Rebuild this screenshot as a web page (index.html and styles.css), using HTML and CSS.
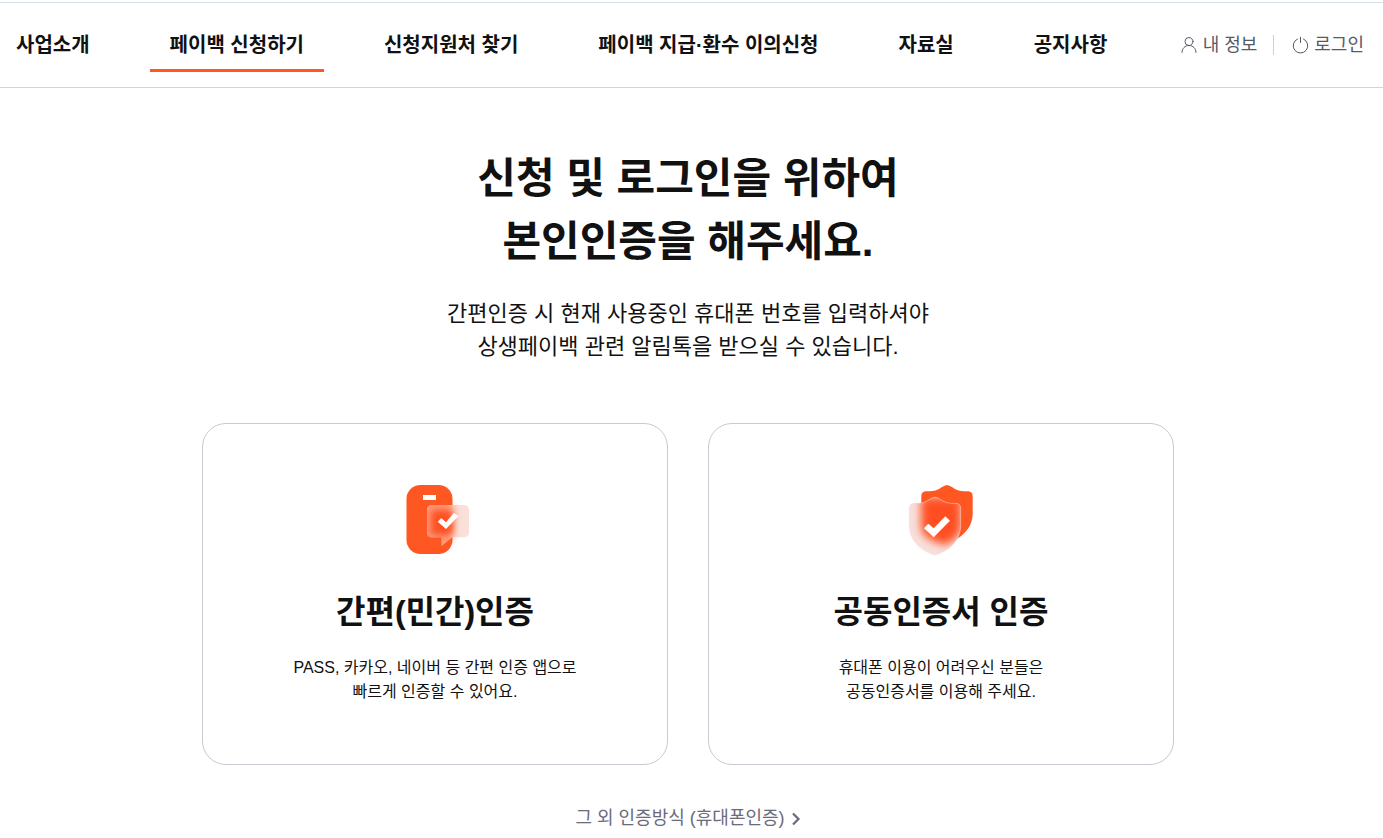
FILE: index.html
```html
<!DOCTYPE html>
<html lang="ko">
<head>
    <meta charset="UTF-8">
    <meta name="viewport" content="width=device-width, initial-scale=1.0">
    <title>본인인증</title>
    <link rel="stylesheet" href="styles.css">
</head>
<body>
    <header class="header">
        <nav class="gnb">
            <a href="#">사업소개</a>
            <a href="#" class="active">페이백 신청하기</a>
            <a href="#">신청지원처 찾기</a>
            <a href="#">페이백 지급·환수 이의신청</a>
            <a href="#">자료실</a>
            <a href="#">공지사항</a>
        </nav>
        <div class="util">
            <a href="#">
                <svg width="20" height="20" viewBox="0 0 20 20" fill="none" stroke="currentColor" stroke-linecap="round">
                    <circle cx="10" cy="6.5" r="4"/>
                    <path d="M3 17.5C3 13.4 6 10.5 10 10.5s7 2.9 7 7"/>
                </svg>
                내 정보
            </a>
            <a href="#">
                <svg width="20" height="20" viewBox="0 0 20 20" fill="none" stroke="currentColor" stroke-linecap="round">
                    <path d="M7.5 4a7.3 7.3 0 1 0 6 0"/>
                    <path d="M10.5 2.2v5.3"/>
                </svg>
                로그인
            </a>
        </div>
    </header>

    <main class="auth">
        <h1>신청 및 로그인을 위하여<br>본인인증을 해주세요.</h1>
        <p class="guide">간편인증 시 현재 사용중인 휴대폰 번호를 입력하셔야<br>상생페이백 관련 알림톡을 받으실 수 있습니다.</p>

        <div class="cards">
            <a href="#" class="card">
                <svg width="72" height="72" viewBox="0 0 72 72">
                    <defs>
                        <clipPath id="bubbleClip">
                            <path d="M32.5 21h33a4.500 4.500 0 0 1 4.500 4.500v23.300a4.500 4.500 0 0 1-4.500 4.500H53l-10.300 8.400v-8.400H32.500a4.500 4.500 0 0 1-4.500-4.500V25.500a4.500 4.500 0 0 1 4.500-4.500z"/>
                        </clipPath>
                        <filter id="soft" x="-50%" y="-50%" width="200%" height="200%">
                            <feGaussianBlur stdDeviation="3.5"/>
                        </filter>
                    </defs>
                    <rect x="42" y="22" width="12" height="34" fill="#ff5722" opacity="0.5" filter="url(#soft)"/>
                    <rect x="7.5" y="1" width="46" height="69" rx="14" fill="#ff5722"/>
                    <rect x="24" y="11" width="13" height="5" fill="#fff"/>
                    <g clip-path="url(#bubbleClip)">
                        <rect x="28" y="21" width="43" height="42" fill="#fae0da"/>
                        <rect x="22" y="14" width="31" height="52" fill="#ff7a50" opacity="0.7" filter="url(#soft)"/>
                        <rect x="32" y="26" width="22" height="25" rx="3" fill="#ff5020" filter="url(#soft)"/>
                    </g>
                    <path d="M38.700 37.700l3.600-3.700 4.700 4.300 8-9.600 4.300 3.600L47 45z" fill="#fff"/>
                </svg>
                <h2>간편(민간)인증</h2>
                <p>PASS, 카카오, 네이버 등 간편 인증 앱으로<br>빠르게 인증할 수 있어요.</p>
            </a>
            <a href="#" class="card">
                <svg width="72" height="72" viewBox="0 0 72 72">
                    <defs>
                        <path id="shield" d="M30 13c7 2 8.500 6.300 17 6.300h3.500c3.400 0 5.200 1.700 5.200 5V41c0 16-12 26-25.700 30C16.300 67 4.300 57 4.300 41V24.300c0-3.300 1.800-5 5.200-5H13C21.500 19.300 23 15 30 13z"/>
                        <clipPath id="shieldClip"><use href="#shield"/></clipPath>
                        <filter id="glow" x="-50%" y="-50%" width="200%" height="200%">
                            <feGaussianBlur stdDeviation="4"/>
                        </filter>
                    </defs>
                    <path d="M14 22h34v30l-12 10H20z" fill="#ff5722" opacity="0.3" filter="url(#glow)"/>
                    <use href="#shield" x="12" y="-12" fill="#ff5722"/>
                    <g clip-path="url(#shieldClip)">
                        <rect width="72" height="72" fill="#f7e0dc"/>
                        <path d="M16 13h40v30c0 9-8 14-16 18-12-3-24-8-24-19z" fill="#ff5020" filter="url(#glow)"/>
                    </g>
                    <use href="#shield" fill="none" stroke="#ffd0c2" stroke-opacity="0.4"/>
                    <path d="M19 44.300l4.300-4.600 5.400 4.600 11.600-12 4.700 4.400-16.300 16.600z" fill="#fff"/>
                </svg>
                <h2>공동인증서 인증</h2>
                <p>휴대폰 이용이 어려우신 분들은<br>공동인증서를 이용해 주세요.</p>
            </a>
        </div>

        <a href="#" class="other">
            그 외 인증방식 (휴대폰인증)
            <svg width="10" height="14" viewBox="0 0 10 14" fill="none" stroke="currentColor" stroke-width="2.2">
                <path d="M2 1.500l5.500 5.500L2 12.500"/>
            </svg>
        </a>
    </main>
</body>
</html>
```
FILE: styles.css
```css
* { box-sizing: border-box; }
body { margin: 0; font-family: "Liberation Sans", "Noto Sans CJK KR", sans-serif; color: #111; background: #fff; }
a { color: inherit; text-decoration: none; }
h1, h2, p { margin: 0; }
svg { display: block; flex: none; }

.header { display: flex; align-items: center; justify-content: space-between; margin-top: 2px; padding: 15px 19px 15px 16px; border-top: 1px solid #d6e0e8; border-bottom: 1px solid #d4d4d8; white-space: nowrap; }
.gnb { display: flex; gap: 80px; }
.gnb a { position: relative; font-size: 20px; font-weight: bold; line-height: 54px; }
.gnb .active::after { content: ""; position: absolute; left: -20px; right: -20px; bottom: 0; height: 3px; background: #ff5722; }

.util { display: flex; align-items: center; color: #555b66; font-size: 18px; line-height: 20px; }
.util a { display: flex; align-items: center; gap: 4px; }
.util a + a { margin-left: 16px; padding-left: 16px; border-left: 1px solid #cdd1d5; }

.auth { display: flex; flex-direction: column; align-items: center; padding: 59px 7px 8px 0; text-align: center; }
.auth h1 { font-size: 42px; line-height: 63px; }
.guide { margin-top: 24px; font-size: 22px; line-height: 33px; }

.cards { display: grid; grid-template-columns: 1fr 1fr; gap: 40px; width: 100%; max-width: 972px; margin-top: 60px; }
.card { display: flex; flex-direction: column; align-items: center; padding: 60px 20px; border: 1px solid #cacad2; border-radius: 24px; }
.card h2 { margin-top: 32px; font-size: 32px; line-height: 48px; }
.card p { margin-top: 20px; font-size: 16px; line-height: 24px; }

.other { display: flex; align-items: center; gap: 6px; margin-top: 40px; color: #6b6b7b; font-size: 18px; line-height: 27px; }
```
